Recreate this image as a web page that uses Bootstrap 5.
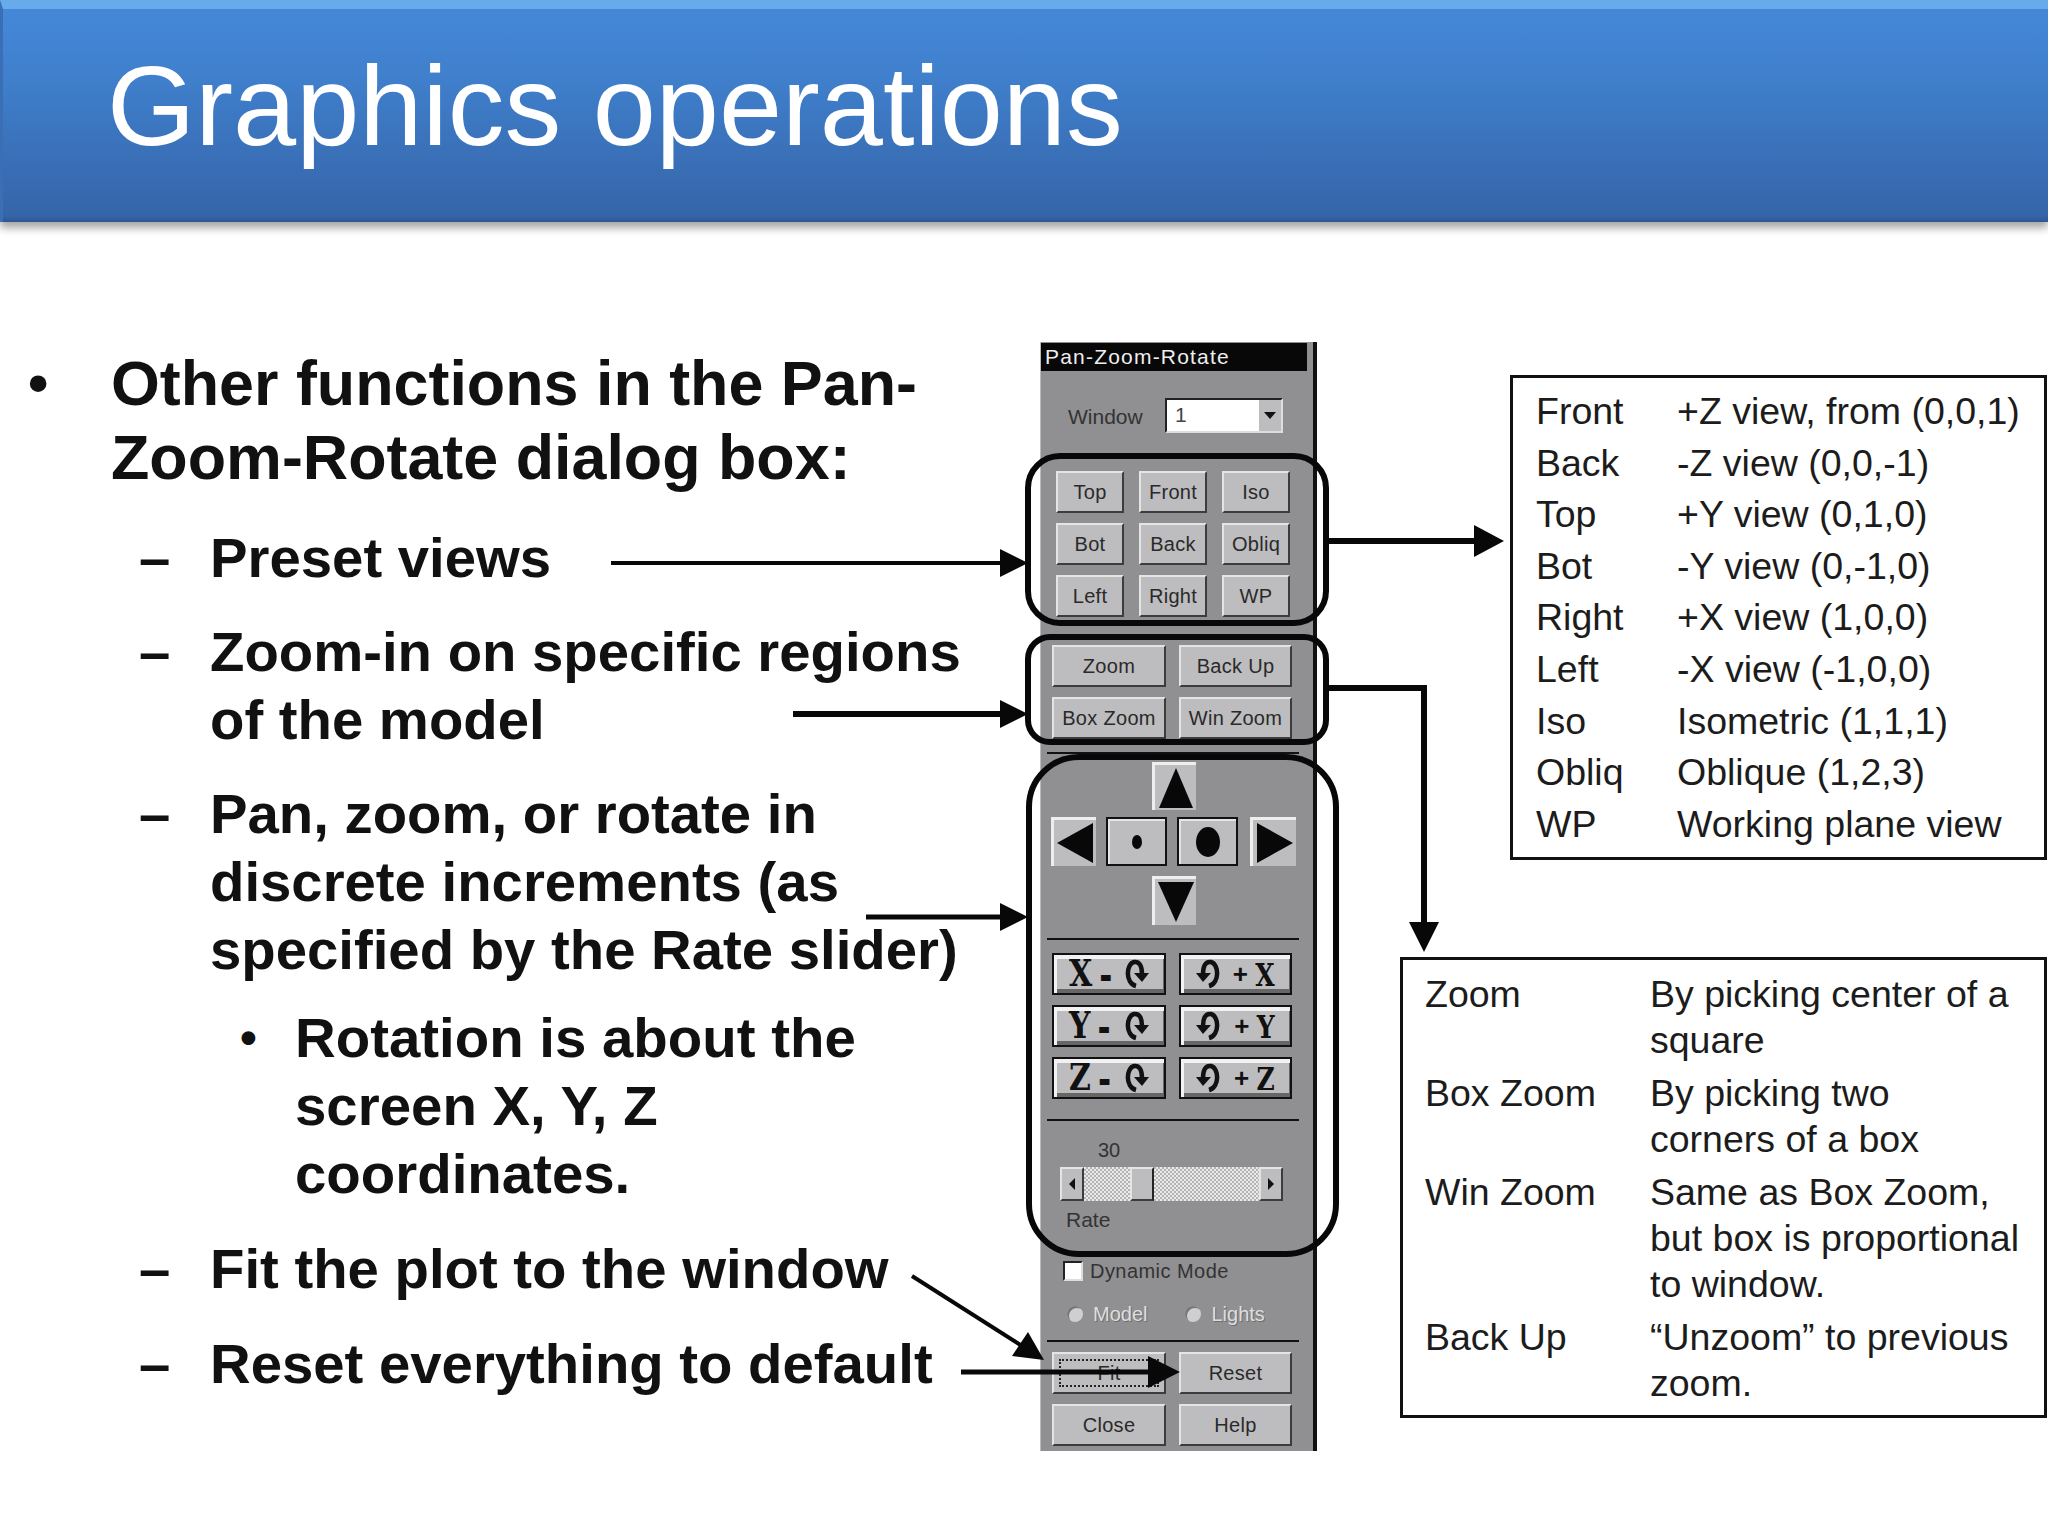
<!DOCTYPE html>
<html lang="en">
<head>
  <meta charset="UTF-8">
  <meta name="viewport" content="width=device-width, initial-scale=1.0">
  <title>Graphics operations</title>
  <link href="https://cdn.jsdelivr.net/npm/bootstrap@5.3.0/dist/css/bootstrap.min.css" rel="stylesheet">
  <style>
    html, body { background: #fff; margin: 0; }
    body { font-family: "Liberation Sans", Arial, sans-serif; color: #111; }
    .slide { width: 2048px; height: 1536px; overflow: hidden; position: relative; }

    /* title band */
    .title-band {
      height: 222px; padding-left: 104px; color: #fff;
      background: linear-gradient(#4487d7 6%, #4080cd 30%, #3565a9 97%, #2d5690 100%);
      border-top: 9px solid #68abea; border-left: 3px solid #3a6fb5;
      box-shadow: 0 6px 8px rgba(0, 0, 0, .35);
    }
    .title-band h1 { font-size: 113.5px; line-height: 194px; font-weight: 400; margin: 0; }

    /* bullets */
    .bullets { width: 1040px; flex: none; padding-top: 124px; font-weight: 700; }
    .lvl1 { font-size: 62.8px; line-height: 74px; padding-left: 28px; display: flex; }
    .lvl1 .mk { width: 83px; flex: none; font-size: 58px; }
    .lvl2 { font-size: 56.3px; line-height: 68px; padding-left: 139px; display: flex; margin-top: 26px; }
    .lvl2 .mk { width: 71px; flex: none; }
    .lvl3 { font-size: 56.4px; line-height: 68px; padding-left: 240px; display: flex; margin-top: 20px; }
    .lvl3 .mk { width: 55px; flex: none; font-size: 48px; }
    .first-sub { margin-top: 30px; }
    .after-sub { margin-top: 27px; }

    /* dialog */
    .pzr {
      width: 277px; height: 1109px; flex: none; margin-top: 120px;
      background: #908f91; border-right: 4px solid #111; border-left: 1px solid #bbb;
      font-family: "Liberation Sans", Arial, sans-serif; font-size: 21px; color: #222;
    }
    .pzr-title { height: 28px; margin: 1px 6px 0 0; background: #080808; color: #eee; font-size: 21px; line-height: 28px; padding-left: 4px; letter-spacing: 1.2px; }
    .win-row { height: 35px; margin-top: 27px; padding-left: 27px; }
    .win-row span { width: 97px; padding-top: 3px; color: #333; }
    .win-select { width: 118px; height: 35px; background: #fff; border: 2px solid #222; border-right-color: #ddd; border-bottom-color: #ddd; padding-left: 8px; line-height: 30px; color: #444; }
    .win-caret { width: 22px; height: 100%; background: #bdbcbe; display: flex; align-items: center; justify-content: center; }
    .btn-w {
      background: #bdbcbe; color: #2a2a2a; height: 42px; display: flex; align-items: center; justify-content: center;
      border: 2px solid; border-color: #e4e4e5 #3c3c3c #3c3c3c #e4e4e5; font-size: 20px; white-space: nowrap; letter-spacing: .3px;
    }
    .grp3 { display: grid; grid-template-columns: 68px 68px 68px; gap: 10px 15px; margin: 38px 0 0 15px; }
    .grp2 { display: grid; grid-template-columns: 114px 113px; gap: 10px 13px; margin: 0 0 0 11px; }
    .grp-zoom { margin-top: 28px; }
    .grp-rot { margin-top: 13px; }
    .grp-rot .btn-w { border-color: #111; box-shadow: inset 3px 4px 0 #f2f2f2, inset -1px -4px 0 #666; justify-content: flex-start; padding: 0 15px; gap: 7px; }
    .grp-end { margin-top: 10px; }
    .sep { height: 2px; background: #111; margin: 0 14px 0 6px; border: 0; opacity: 1; }
    .sep-a { margin-top: 13px; }
    .sep-b { margin-top: 13px; }
    .sep-c { margin-top: 20px; }
    .sep-d { margin-top: 15px; }
    .nav-sq { width: 44px; height: 48px; background: #bdbcbe; border-top: 3px solid #eee; border-left: 3px solid #eee; display: flex; align-items: center; justify-content: center; }
    .nav-up { margin: 8px 0 0 111px; }
    .nav-mid { margin: 7px 0 0 10px; height: 49px; gap: 10px; }
    .nav-mid .nav-sq { height: 49px; width: 45px; }
    .nav-mid .nav-end { width: 46px; margin-left: 2px; }
    .nav-dot { width: 61px; height: 49px; background: #bdbcbe; border: 2px solid #111; box-shadow: inset 2px 2px 0 #e4e4e5; display: flex; align-items: center; justify-content: center; }
    .nav-dn { margin: 10px 0 0 111px; height: 49px; }
    .rot-ltr { font-family: "DejaVu Serif", serif; font-weight: 700; font-size: 30px; color: #111; line-height: 1; display: inline-block; transform: scaleY(1.22); }
    .rot-sm { font-size: 25px; transform: scaleY(1.3); }
    .rot-sign { font-family: "Liberation Sans", sans-serif; font-weight: 700; font-size: 38px; color: #111; line-height: 1; transform: scaleY(1.3); display: inline-block; }
    .rot-plus { font-size: 26px; transform: none; margin-left: auto; }
    .rot-ic { margin-left: auto; }
    .rate-val { height: 30px; margin: 14px 0 0 57px; line-height: 30px; color: #333; font-size: 20px; }
    .rate-lbl { height: 30px; margin: 4px 0 0 25px; line-height: 30px; color: #333; }
    .slider-w { width: 223px; height: 34px; margin: 2px 0 0 19px; background: repeating-conic-gradient(#b4b4b5 0 25%, #eaeaea 0 50%) 0 0 / 4px 4px; }
    .slider-end { width: 24px; height: 100%; background: #bdbcbe; border: 2px solid; border-color: #e4e4e5 #3c3c3c #3c3c3c #e4e4e5; display: flex; align-items: center; justify-content: center; }
    .slider-thumb { width: 24px; height: 100%; margin-left: 46px; background: #bdbcbe; border: 2px solid; border-color: #e4e4e5 #222 #3c3c3c #e4e4e5; }
    .dyn-row { height: 22px; margin: 25px 0 0 22px; line-height: 22px; font-size: 20px; color: #333; letter-spacing: .45px; }
    .dyn-box { width: 20px; height: 20px; background: #fff; border: 2px solid #222; border-right-color: #ddd; border-bottom-color: #ddd; margin-right: 7px; }
    .rad-row { height: 22px; margin: 21px 0 0 26px; line-height: 22px; font-size: 20px; color: #dedede; text-shadow: 1px 1px 0 #6e6e6e; }
    .rad-dot { width: 16px; height: 16px; border-radius: 50%; background: #cfcfcf; box-shadow: inset 2px 2px 0 #777; margin-right: 10px; }
    .rad-gap { margin-left: 38px; }
    .focus-in { border: 2px dotted #222; width: calc(100% - 10px); height: calc(100% - 10px); display: flex; align-items: center; justify-content: center; }

    /* legend boxes */
    .legend-col { flex: 1; }
    .legend { border: 3px solid #111; background: #fff; font-size: 37.5px; color: #1c1c1c; }
    .legend-a { margin: 153px 1px 0 193px; height: 485px; padding: 8px 0 0 23px; line-height: 51.6px; }
    .legend-b { margin: 97px 1px 0 83px; height: 461px; padding: 11px 0 0 22px; line-height: 46px; }
    .legend table { --bs-table-bg: transparent; margin: 0; width: auto; }
    .legend td { padding: 0; border: 0; color: #1c1c1c; }
    .legend-a td:first-child { width: 141px; }
    .legend-b td:first-child { width: 225px; }
    .legend-b tr + tr td { padding-top: 7px; }

    .marks { position: absolute; left: 0; top: 0; pointer-events: none; }
  </style>
</head>

<body>
  <div class="slide">
    <svg width="0" height="0" class="position-absolute">
      <symbol id="rot" viewBox="0 0 26 30">
        <path d="M13 27C2 24 3 5 11 3c6-1 8 5 8 12" fill="none" stroke="#111" stroke-width="4.500"/>
        <polygon points="11,14 26,14 19,23" fill="#111"/>
      </symbol>
    </svg>

    <div class="title-band"><h1>Graphics operations</h1></div>

    <div class="d-flex">
      <!-- left column -->
      <div class="bullets">
        <div class="lvl1"><span class="mk">•</span><span>Other functions in the Pan-<br>Zoom-Rotate dialog box:</span></div>
        <div class="lvl2 first-sub"><span class="mk">–</span><span>Preset views</span></div>
        <div class="lvl2"><span class="mk">–</span><span>Zoom-in on specific regions<br>of the model</span></div>
        <div class="lvl2"><span class="mk">–</span><span>Pan, zoom, or rotate in<br>discrete increments (as<br>specified by the Rate slider)</span></div>
        <div class="lvl3"><span class="mk">•</span><span>Rotation is about the<br>screen X, Y, Z<br>coordinates.</span></div>
        <div class="lvl2 after-sub"><span class="mk">–</span><span>Fit the plot to the window</span></div>
        <div class="lvl2 after-sub"><span class="mk">–</span><span>Reset everything to default</span></div>
      </div>

      <!-- Pan-Zoom-Rotate dialog -->
      <div class="pzr">
        <div class="pzr-title">Pan-Zoom-Rotate</div>
        <div class="win-row d-flex align-items-center">
          <span>Window</span>
          <div class="win-select d-flex justify-content-between">1
            <div class="win-caret"><svg width="12" height="7"><polygon points="0,0 12,0 6,7" fill="#111"/></svg></div>
          </div>
        </div>

        <div class="grp3">
          <div class="btn-w">Top</div><div class="btn-w">Front</div><div class="btn-w">Iso</div>
          <div class="btn-w">Bot</div><div class="btn-w">Back</div><div class="btn-w">Obliq</div>
          <div class="btn-w">Left</div><div class="btn-w">Right</div><div class="btn-w">WP</div>
        </div>

        <div class="grp2 grp-zoom">
          <div class="btn-w">Zoom</div><div class="btn-w">Back Up</div>
          <div class="btn-w">Box Zoom</div><div class="btn-w">Win Zoom</div>
        </div>

        <hr class="sep sep-a">

        <div class="nav-sq nav-up"><svg width="36" height="42"><polygon points="18,1 35,41 1,41" fill="#080808"/></svg></div>
        <div class="nav-mid d-flex">
          <div class="nav-sq"><svg width="38" height="44"><polygon points="1,22 37,2 37,42" fill="#080808"/></svg></div>
          <div class="nav-dot"><svg width="12" height="16"><ellipse cx="6" cy="8" rx="5" ry="7" fill="#080808"/></svg></div>
          <div class="nav-dot"><svg width="26" height="32"><ellipse cx="13" cy="16" rx="12" ry="15" fill="#080808"/></svg></div>
          <div class="nav-sq nav-end"><svg width="38" height="44"><polygon points="37,22 1,2 1,42" fill="#080808"/></svg></div>
        </div>
        <div class="nav-sq nav-dn"><svg width="38" height="42"><polygon points="19,41 1,1 37,1" fill="#080808"/></svg></div>

        <hr class="sep sep-b">

        <div class="grp2 grp-rot">
          <div class="btn-w"><span class="rot-ltr">X</span><span class="rot-sign">-</span><svg class="rot-ic" width="26" height="30"><use href="#rot"/></svg></div>
          <div class="btn-w"><svg width="26" height="30"><use href="#rot" transform="matrix(-1 0 0 1 26 0)"/></svg><span class="rot-sign rot-plus">+</span><span class="rot-ltr rot-sm">X</span></div>
          <div class="btn-w"><span class="rot-ltr">Y</span><span class="rot-sign">-</span><svg class="rot-ic" width="26" height="30"><use href="#rot"/></svg></div>
          <div class="btn-w"><svg width="26" height="30"><use href="#rot" transform="matrix(-1 0 0 1 26 0)"/></svg><span class="rot-sign rot-plus">+</span><span class="rot-ltr rot-sm">Y</span></div>
          <div class="btn-w"><span class="rot-ltr">Z</span><span class="rot-sign">-</span><svg class="rot-ic" width="26" height="30"><use href="#rot"/></svg></div>
          <div class="btn-w"><svg width="26" height="30"><use href="#rot" transform="matrix(-1 0 0 1 26 0)"/></svg><span class="rot-sign rot-plus">+</span><span class="rot-ltr rot-sm">Z</span></div>
        </div>

        <hr class="sep sep-c">

        <div class="rate-val">30</div>
        <div class="slider-w d-flex">
          <div class="slider-end"><svg width="6" height="12"><polygon points="0,6 6,0 6,12" fill="#111"/></svg></div>
          <div class="slider-thumb"></div>
          <div class="slider-end ms-auto"><svg width="6" height="12"><polygon points="6,6 0,0 0,12" fill="#111"/></svg></div>
        </div>
        <div class="rate-lbl">Rate</div>

        <div class="dyn-row d-flex align-items-center"><span class="dyn-box"></span>Dynamic Mode</div>
        <div class="rad-row d-flex align-items-center">
          <span class="rad-dot"></span>Model
          <span class="rad-dot rad-gap"></span>Lights
        </div>

        <hr class="sep sep-d">

        <div class="grp2 grp-end">
          <div class="btn-w"><div class="focus-in">Fit</div></div><div class="btn-w">Reset</div>
          <div class="btn-w">Close</div><div class="btn-w">Help</div>
        </div>
      </div>

      <!-- legends -->
      <div class="legend-col">
        <div class="legend legend-a">
          <table class="table table-borderless">
            <tr><td>Front</td><td>+Z view, from (0,0,1)</td></tr>
            <tr><td>Back</td><td>-Z view (0,0,-1)</td></tr>
            <tr><td>Top</td><td>+Y view (0,1,0)</td></tr>
            <tr><td>Bot</td><td>-Y view (0,-1,0)</td></tr>
            <tr><td>Right</td><td>+X view (1,0,0)</td></tr>
            <tr><td>Left</td><td>-X view (-1,0,0)</td></tr>
            <tr><td>Iso</td><td>Isometric (1,1,1)</td></tr>
            <tr><td>Obliq</td><td>Oblique (1,2,3)</td></tr>
            <tr><td>WP</td><td>Working plane view</td></tr>
          </table>
        </div>
        <div class="legend legend-b">
          <table class="table table-borderless">
            <tr class="align-top"><td>Zoom</td><td>By picking center of a<br>square</td></tr>
            <tr class="align-top"><td>Box Zoom</td><td>By picking two<br>corners of a box</td></tr>
            <tr class="align-top"><td>Win Zoom</td><td>Same as Box Zoom,<br>but box is proportional<br>to window.</td></tr>
            <tr class="align-top"><td>Back Up</td><td>“Unzoom” to previous<br>zoom.</td></tr>
          </table>
        </div>
      </div>
    </div>

    <!-- callouts and arrows drawn over the slide -->
    <svg class="marks" width="2048" height="1536" fill="none" stroke="#080808">
      <rect x="1028" y="456" width="298" height="167" rx="32" stroke-width="6"/>
      <rect x="1028" y="637" width="298" height="105" rx="22" stroke-width="6"/>
      <rect x="1029" y="757" width="307" height="497" rx="50" stroke-width="6"/>

      <path d="M611 563H1004" stroke-width="4"/>
      <polygon points="1028,563 1000,549 1000,577" fill="#080808" stroke="none"/>
      <path d="M793 714H1004" stroke-width="6"/>
      <polygon points="1028,714 1000,700 1000,728" fill="#080808" stroke="none"/>
      <path d="M866 917H1004" stroke-width="5"/>
      <polygon points="1028,917 1000,903 1000,931" fill="#080808" stroke="none"/>
      <path d="M912 1276L1022 1346" stroke-width="4"/>
      <polygon points="1044,1360 1012,1356 1028,1332" fill="#080808" stroke="none"/>
      <path d="M961 1372H1152" stroke-width="5"/>
      <polygon points="1180,1372 1148,1356 1148,1388" fill="#080808" stroke="none"/>
      <path d="M1328 541H1476" stroke-width="6"/>
      <polygon points="1504,541 1474,525 1474,557" fill="#080808" stroke="none"/>
      <path d="M1328 688H1424V926" stroke-width="6"/>
      <polygon points="1424,952 1409,922 1439,922" fill="#080808" stroke="none"/>
    </svg>
  </div>

  <script src="https://cdn.jsdelivr.net/npm/bootstrap@5.3.0/dist/js/bootstrap.bundle.min.js"></script>
</body>
</html>
